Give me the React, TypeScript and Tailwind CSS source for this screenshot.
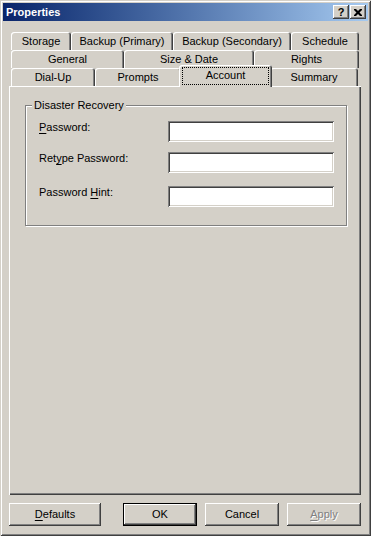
import React from 'react'

const tabRows: [string, number][][] = [
  [['Storage', 60], ['Backup (Primary)', 102], ['Backup (Secondary)', 118], ['Schedule', 68]],
  [['General', 113], ['Size & Date', 130], ['Rights', 105]],
  [['Dial-Up', 84], ['Prompts', 86], ['Account', 90], ['Summary', 88]],
]

const raised =
  'shadow-[inset_-1px_-1px_#404040,inset_1px_1px_#ffffff,inset_-2px_-2px_#808080,inset_2px_2px_#d4d0c8]'
const sunken =
  'shadow-[inset_1px_1px_#808080,inset_-1px_-1px_#ffffff,inset_2px_2px_#404040,inset_-2px_-2px_#d4d0c8]'

function Tab({ label, width }: { label: string; width: number }) {
  if (label === 'Account') {
    return (
      <div
        className="relative z-10 -mx-[2px] -mt-[3px] h-[22px] shrink-0 rounded-t-[3px] bg-[#d4d0c8] shadow-[inset_1px_1px_#ffffff,inset_-1px_0_#404040,inset_-2px_0_#808080] flex items-center justify-center pb-[1px]"
        style={{ width: width + 3 }}
      >
        <span className="absolute left-[3px] right-[3px] top-[2px] bottom-[2px] border border-dotted border-black" />
        {label}
      </div>
    )
  }
  return (
    <div
      className="h-[18px] shrink-0 rounded-t-[3px] shadow-[inset_1px_1px_#ffffff,inset_-1px_0_#404040,inset_-2px_0_#808080] flex items-center justify-center pt-[1px]"
      style={{ width }}
    >
      {label}
    </div>
  )
}

function Field({ label, u, className }: { label: [string, string, string]; u?: boolean; className?: string }) {
  return (
    <div className={`flex items-start h-[21px] ${className ?? ''}`}>
      <div className="w-[129px] leading-[13px]">
        {label[0]}
        <span className="underline underline-offset-[2px]">{label[1]}</span>
        {label[2]}
      </div>
      <div className={`w-[166px] h-[21px] bg-white ${sunken}`} />
    </div>
  )
}

export default function App() {
  return (
    <div className="w-[371px] h-[536px] bg-[#d4d0c8] p-[3px] flex flex-col text-[11px] text-black font-['Liberation_Sans',Arial,sans-serif] shadow-[inset_1px_1px_#d4d0c8,inset_-1px_-1px_#404040,inset_2px_2px_#ffffff,inset_-2px_-2px_#808080]">
      {/* title bar */}
      <div className="h-[18px] flex items-center bg-linear-to-r from-[#0a246a] to-[#a6caf0] pl-[3px] pr-[2px]">
        <span className="text-white font-bold text-[11px] leading-none">Properties</span>
        <div className="ml-auto flex gap-[1px]">
          <div className={`w-[16px] h-[14px] bg-[#d4d0c8] flex items-center justify-center font-bold text-[11px] leading-none ${raised}`}>
            ?
          </div>
          <div className={`w-[16px] h-[14px] bg-[#d4d0c8] flex items-center justify-center ${raised}`}>
            <svg width="8" height="7" viewBox="0 0 8 7">
              <path d="M0 0h2l2 2 2-2h2v1L5.5 3.5 8 6v1H6L4 5 2 7H0V6l2.5-2.5L0 1z" fill="#000" />
            </svg>
          </div>
        </div>
      </div>

      <div className="flex flex-col pl-[6px] pr-[7px] mt-[11px]">
        {/* tab rows */}
        {tabRows.map((row, i) => (
          <div key={i} className="flex h-[18px] ml-[2px] w-[348px]">
            {row.map(([label, width]) => (
              <Tab key={label} label={label} width={width} />
            ))}
          </div>
        ))}

        {/* tab panel */}
        <div className="h-[409px] pl-[16px] pr-[14px] pt-[19px] shadow-[inset_1px_1px_#ffffff,inset_-1px_-1px_#404040,inset_-2px_-2px_#808080]">
          <div className="relative border border-[#808080] shadow-[inset_1px_1px_#ffffff,1px_1px_#ffffff] pt-[15px] pl-[13px] pb-[18px]">
            <span className="absolute left-[6px] -top-[7px] px-[2px] bg-[#d4d0c8] leading-[13px]">
              Disaster Recovery
            </span>
            <Field label={['', 'P', 'assword:']} />
            <Field label={['Ret', 'y', 'pe Password:']} className="mt-[10px]" />
            <Field label={['Password ', 'H', 'int:']} className="mt-[13px]" />
          </div>
        </div>

        {/* buttons */}
        <div className="flex mt-[8px] h-[23px]">
          <button className={`w-[92px] h-[23px] bg-[#d4d0c8] ${raised}`}>
            <span className="underline underline-offset-[2px]">D</span>efaults
          </button>
          <div className="ml-auto flex gap-[8px]">
            <button className="w-[74px] h-[23px] bg-[#d4d0c8] shadow-[inset_1px_1px_#000000,inset_-1px_-1px_#000000,inset_-2px_-2px_#404040,inset_2px_2px_#ffffff,inset_-3px_-3px_#808080]">
              OK
            </button>
            <button className={`w-[74px] h-[23px] bg-[#d4d0c8] ${raised}`}>Cancel</button>
            <button className={`w-[74px] h-[23px] bg-[#d4d0c8] text-[#808080] [text-shadow:1px_1px_#ffffff] ${raised}`}>
              <span className="underline underline-offset-[2px]">A</span>pply
            </button>
          </div>
        </div>
      </div>
    </div>
  )
}
